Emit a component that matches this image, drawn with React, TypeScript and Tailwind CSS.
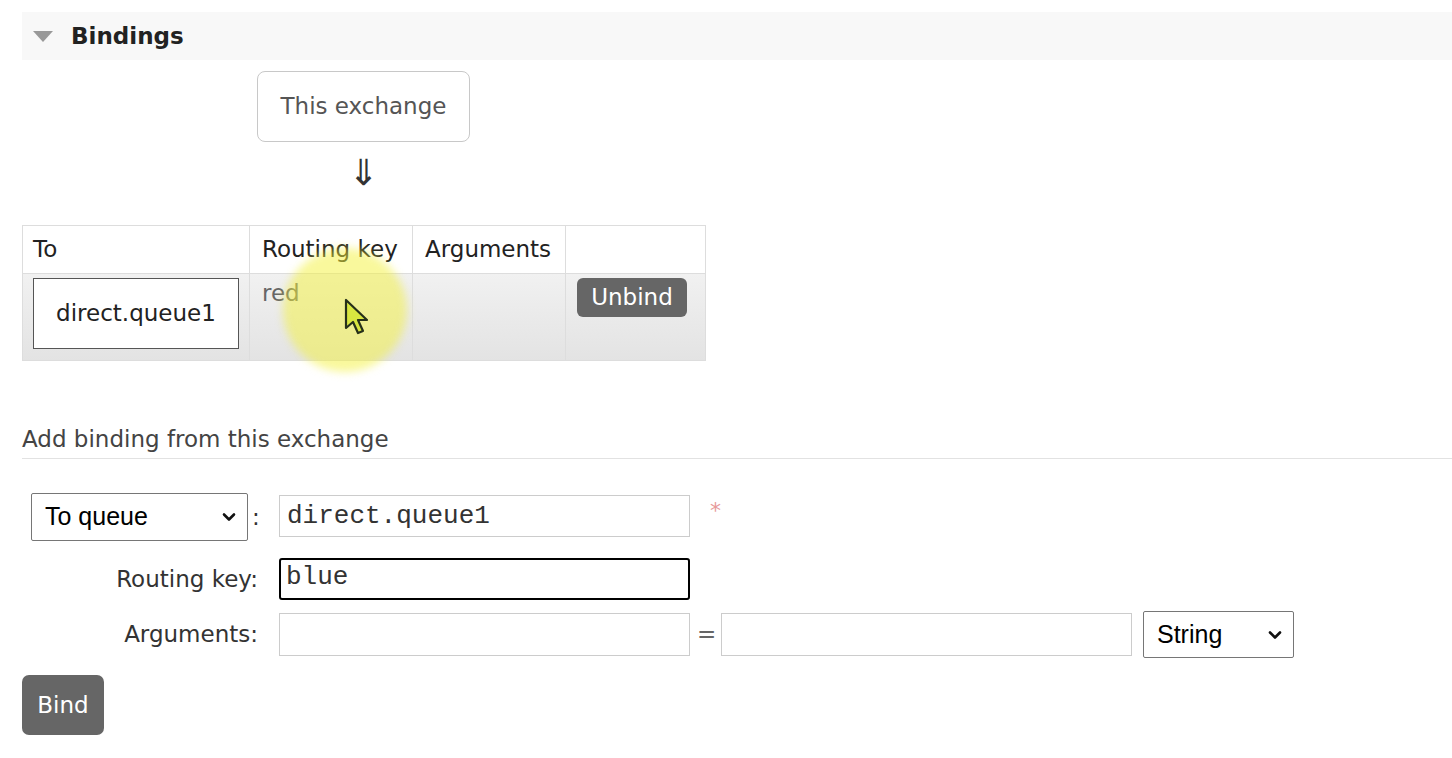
import React from 'react'

const Chevron = () => (
  <svg width="14" height="9" viewBox="0 0 14 9" className="pointer-events-none absolute right-[12px] top-1/2 -translate-y-1/2">
    <path d="M2 2 L7 7 L12 2" fill="none" stroke="#111" strokeWidth="2.6" strokeLinecap="round" strokeLinejoin="round" />
  </svg>
)

const FakeSelect = ({ value, className }: { value: string; className: string }) => (
  <div className={`relative ${className}`}>
    <select
      defaultValue={value}
      className="h-full w-full appearance-none rounded-[2px] border border-[#767676] bg-white pl-[13px] font-['Liberation_Sans',Arial,sans-serif] text-[25px] text-black outline-none"
    >
      <option>{value}</option>
    </select>
    <Chevron />
  </div>
)

const Cursor = () => (
  <svg width="28" height="38" viewBox="0 0 28 38" className="absolute left-[321px] top-[73px]">
    <path d="M3 2 L3 30 L10 24 L15 35 L20 33 L15 22 L24 22 Z" fill="#d8e640" stroke="#26301a" strokeWidth="2.2" strokeLinejoin="round" />
  </svg>
)

export default function App() {
  return (
    <div className="min-h-screen bg-white pl-[22px] pt-[12px] font-['DejaVu_Sans',Verdana,sans-serif] text-[23px] text-[#222]">
      {/* section header */}
      <div className="flex h-[48px] items-center bg-[#f8f8f8] pl-[11px]">
        <svg width="20" height="11" viewBox="0 0 20 11">
          <path d="M0 0 L20 0 L10 11 Z" fill="#999" />
        </svg>
        <span className="ml-[18px] font-bold text-[#222]">Bindings</span>
      </div>

      <div className="ml-[235px] mt-[11px] flex h-[71px] w-[213px] items-center justify-center rounded-[8px] border border-[#c8c8c8] text-[#555]">
        This exchange
      </div>
      <div className="ml-[235px] flex h-[83px] w-[213px] justify-center pt-[13px] text-[36px] leading-none text-[#333]">
        ⇓
      </div>

      {/* bindings table */}
      <div className="relative w-[684px]">
        <table className="w-[684px] border-collapse">
          <thead>
            <tr className="h-[48px] bg-white text-left">
              <th className="w-[227px] border border-[#ddd] pl-[10px] font-normal">To</th>
              <th className="w-[163px] border border-[#ddd] pl-[12px] font-normal">Routing key</th>
              <th className="w-[153px] border border-[#ddd] pl-[12px] font-normal">Arguments</th>
              <th className="border border-[#ddd]"></th>
            </tr>
          </thead>
          <tbody>
            <tr className="h-[87px] bg-gradient-to-b from-[#f1f1f1] to-[#e3e3e3] align-top">
              <td className="border border-[#ddd] pl-[10px] pt-[4px]">
                <div className="flex h-[71px] w-[206px] items-center justify-center border border-[#555] bg-white text-[#222]">
                  direct.queue1
                </div>
              </td>
              <td className="border border-[#ddd] pl-[12px] pt-[4px] leading-[30px] text-[#666]">red</td>
              <td className="border border-[#ddd]"></td>
              <td className="border border-[#ddd] pl-[11px] pt-[4px]">
                <div className="flex h-[39px] w-[110px] items-center justify-center rounded-[6px] bg-[#666] text-white">
                  Unbind
                </div>
              </td>
            </tr>
          </tbody>
        </table>
        <div className="pointer-events-none absolute left-[261px] top-[23px] h-[124px] w-[124px] rounded-full bg-[#f4f23a]/50 blur-[4px]" />
        <Cursor />
      </div>

      {/* add binding form */}
      <div className="mt-[63px] h-[35px] border-b border-[#e2e2e2] leading-[30px] text-[#444]">
        Add binding from this exchange
      </div>

      <div className="mt-[34px] flex h-[48px] items-start">
        <div className="flex w-[236px] items-center justify-end">
          <FakeSelect value="To queue" className="h-[48px] w-[217px]" />
          <span className="ml-[4px] w-[6px] text-[#333]">:</span>
        </div>
        <div className="ml-[21px] mt-[2px] flex h-[42px] w-[411px] items-center border border-[#ccc] bg-white pl-[7px] font-['Liberation_Mono','Courier_New',monospace] text-[26px] text-[#333]">
          direct.queue1
        </div>
        <span className="ml-[20px] pt-[6px] text-[22px] leading-[24px] text-[#e79a9a]">*</span>
      </div>

      <div className="mt-[17px] flex h-[42px] items-center">
        <div className="w-[236px] text-right text-[#333]">Routing key:</div>
        <div className="ml-[21px] flex h-[42px] w-[411px] items-start rounded-[3px] border-2 border-black bg-white pl-[5px] font-['Liberation_Mono','Courier_New',monospace] text-[26px] leading-[34px] text-[#333]">
          blue
        </div>
      </div>

      <div className="mt-[11px] flex h-[47px] items-center">
        <div className="w-[236px] text-right text-[#333]">Arguments:</div>
        <div className="ml-[21px] h-[43px] w-[411px] border border-[#ccc] bg-white" />
        <span className="ml-[7px] w-[24px] text-[#666]">=</span>
        <div className="h-[43px] w-[411px] border border-[#ccc] bg-white" />
        <FakeSelect value="String" className="ml-[11px] h-[47px] w-[151px]" />
      </div>

      <div className="mt-[17px] flex h-[60px] w-[82px] items-center justify-center rounded-[7px] bg-[#666] text-white">
        Bind
      </div>
    </div>
  )
}
